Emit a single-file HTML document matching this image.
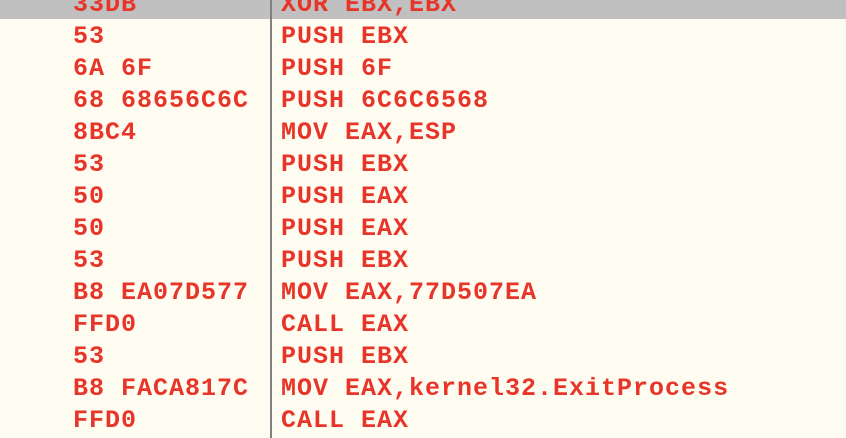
<!DOCTYPE html>
<html><head><style>
html,body{margin:0;padding:0;}
body{width:846px;height:438px;background:#FEFCF0;position:relative;overflow:hidden;font-family:"Liberation Mono",monospace;font-weight:bold;font-size:25px;letter-spacing:1px;color:#E8352A;}
.bar{position:absolute;left:0;top:0;width:846px;height:19px;background:#C0C0C0;}
.sep{position:absolute;left:270px;top:0;width:2px;height:438px;background:#808080;}
.r{position:absolute;height:32px;line-height:32px;white-space:pre;margin-top:2px;}
.a{left:73px}.b{left:281px}
</style></head><body>
<div class="bar"></div>
<div class="sep"></div>
<div class="r a" style="top:-13px">33DB</div><div class="r b" style="top:-13px">XOR EBX,EBX</div>
<div class="r a" style="top:19px">53</div><div class="r b" style="top:19px">PUSH EBX</div>
<div class="r a" style="top:51px">6A 6F</div><div class="r b" style="top:51px">PUSH 6F</div>
<div class="r a" style="top:83px">68 68656C6C</div><div class="r b" style="top:83px">PUSH 6C6C6568</div>
<div class="r a" style="top:115px">8BC4</div><div class="r b" style="top:115px">MOV EAX,ESP</div>
<div class="r a" style="top:147px">53</div><div class="r b" style="top:147px">PUSH EBX</div>
<div class="r a" style="top:179px">50</div><div class="r b" style="top:179px">PUSH EAX</div>
<div class="r a" style="top:211px">50</div><div class="r b" style="top:211px">PUSH EAX</div>
<div class="r a" style="top:243px">53</div><div class="r b" style="top:243px">PUSH EBX</div>
<div class="r a" style="top:275px">B8 EA07D577</div><div class="r b" style="top:275px">MOV EAX,77D507EA</div>
<div class="r a" style="top:307px">FFD0</div><div class="r b" style="top:307px">CALL EAX</div>
<div class="r a" style="top:339px">53</div><div class="r b" style="top:339px">PUSH EBX</div>
<div class="r a" style="top:371px">B8 FACA817C</div><div class="r b" style="top:371px">MOV EAX,kernel32.ExitProcess</div>
<div class="r a" style="top:403px">FFD0</div><div class="r b" style="top:403px">CALL EAX</div>
</body></html>
